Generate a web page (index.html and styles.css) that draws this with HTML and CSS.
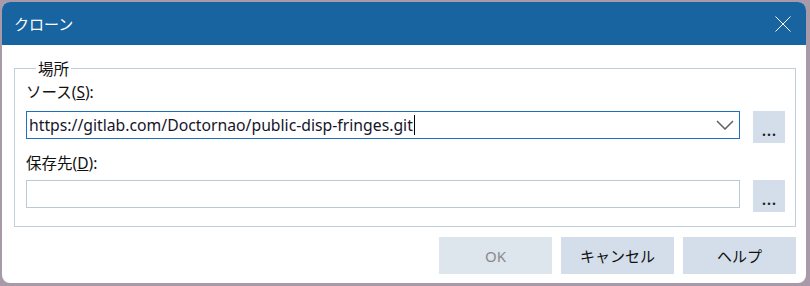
FILE: index.html
```html
<!DOCTYPE html>
<html lang="ja">
<head>
    <meta charset="UTF-8">
    <title>クローン</title>
    <link rel="stylesheet" href="styles.css">
</head>
<body>
    <div class="window">
        <div class="titlebar">
            <span class="title">クローン</span>
            <svg class="close" width="16" height="16" viewBox="0 0 16 16">
                <path d="M0.5 0.5 L15.5 15.5 M15.5 0.5 L0.5 15.5" stroke="#fff" stroke-width="1" fill="none"/>
            </svg>
        </div>

        <div class="content">
            <fieldset class="group">
                <legend>場所</legend>

                <div class="label">ソース(<u>S</u>):</div>
                <div class="row">
                    <div class="combo focused">
                        <span class="value">https://gitlab.com/Doctornao/public-disp-fringes.git</span><span class="caret"></span>
                        <svg class="chevron" width="18" height="10" viewBox="0 0 18 10">
                            <path d="M1 1 L9 9 L17 1" stroke="#666" stroke-width="1.6" fill="none"/>
                        </svg>
                    </div>
                    <button class="browse">...</button>
                </div>

                <div class="label">保存先(<u>D</u>):</div>
                <div class="row">
                    <div class="combo"></div>
                    <button class="browse">...</button>
                </div>
            </fieldset>

            <div class="buttons">
                <button class="btn disabled">OK</button>
                <button class="btn">キャンセル</button>
                <button class="btn">ヘルプ</button>
            </div>
        </div>
    </div>
</body>
</html>
```

FILE: styles.css
```css
* {
    box-sizing: border-box;
}

body {
    margin: 0;
    background-color: #a99aa9;
    font-family: "Noto Sans", "Noto Sans CJK JP", sans-serif;
    font-size: 15px;
    color: #111;
}

.window {
    margin: 2px;
    width: 804px;
    height: 281px;
    background-color: #fff;
    border-radius: 8px;
    overflow: hidden;
}

.titlebar {
    height: 43px;
    background-color: #1864a0;
    display: flex;
    align-items: center;
    justify-content: space-between;
    padding: 0 15px 0 12px;
}

.title {
    color: #fff;
    font-size: 15px;
    font-family: "Noto Sans CJK JP", sans-serif;
}

.close {
    margin-top: 1px;
}

.content {
    padding: 0 10px 0 12px;
}

.group {
    margin: 14px 0 0 0;
    border: 1px solid #bfd0d8;
    padding: 2px 10px 14px 11px;
}

.group legend {
    padding: 0 2px;
    margin-left: 10px;
    line-height: 18px;
    font-size: 15.5px;
    font-family: "Noto Sans CJK JP", sans-serif;
}

.label {
    line-height: 20px;
    margin: 3px 0 9px 0;
    font-size: 15.5px;
    font-family: "Noto Sans", "Noto Sans CJK JP", sans-serif;
}

.label u {
    text-decoration-thickness: 1px;
}

.row {
    display: flex;
    align-items: flex-start;
    gap: 13px;
}

.row + .label {
    margin-top: 10px;
    margin-bottom: 7px;
}

.combo {
    flex: 1;
    height: 28px;
    border: 1px solid #b9cad3;
    display: flex;
    align-items: center;
    padding-left: 2px;
}

.combo.focused {
    border-color: #1f6fc0;
}

.value {
    color: #14142a;
    font-size: 15.75px;
    white-space: nowrap;
}

.caret {
    width: 1px;
    height: 20px;
    background-color: #000;
    margin-left: 1px;
}

.chevron {
    margin-left: auto;
    margin-right: 5px;
}

.browse {
    width: 32px;
    height: 32px;
    border: none;
    background-color: #d3deea;
    font-family: "Noto Sans", sans-serif;
    font-size: 14px;
    font-weight: bold;
    letter-spacing: 1px;
    padding: 7px 0 0 1px;
    color: #222;
}

.buttons {
    display: flex;
    justify-content: flex-end;
    gap: 9px;
    margin-top: 10px;
}

.btn {
    width: 113px;
    height: 37px;
    border: none;
    background-color: #d3deea;
    font-family: "Noto Sans", "Noto Sans CJK JP", sans-serif;
    font-size: 15px;
    color: #111;
}

.btn.disabled {
    background-color: #dde5ed;
    color: #8a8a8a;
}
```
